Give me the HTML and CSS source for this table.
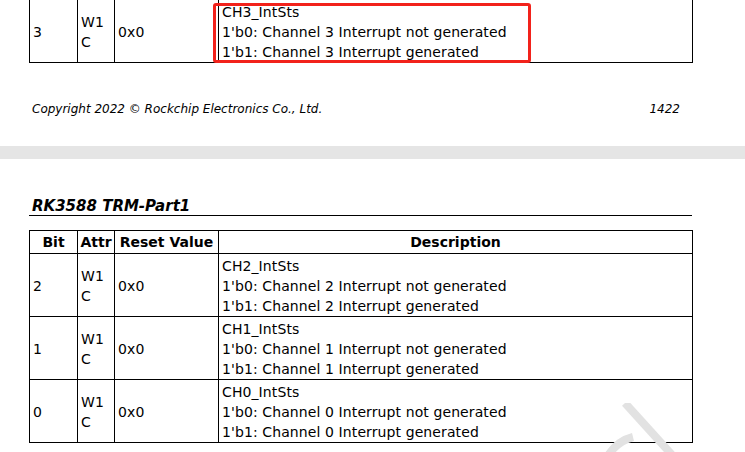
FILE: index.html
```html
<!DOCTYPE html>
<html>
<head>
<meta charset="utf-8">
<link rel="stylesheet" href="styles.css">
</head>
<body>
<div class="sheet">
  <section class="page page-top">
    <table class="reg">
      <colgroup><col class="c-bit"><col class="c-attr"><col class="c-reset"><col class="c-desc"></colgroup>
      <tr>
        <td>3</td><td>W1<br>C</td><td>0x0</td>
        <td>CH3_IntSts<br>1'b0: Channel 3 Interrupt not generated<br>1'b1: Channel 3 Interrupt generated</td>
      </tr>
    </table>
    <div class="highlight"></div>
    <footer class="foot">
      <span>Copyright 2022 © Rockchip Electronics Co., Ltd.</span>
      <span>1422</span>
    </footer>
  </section>
  <div class="gap"></div>
  <section class="page page-bottom">
    <h2 class="doc-title">RK3588 TRM-Part1</h2>
    <table class="reg">
      <colgroup><col class="c-bit"><col class="c-attr"><col class="c-reset"><col class="c-desc"></colgroup>
      <tr class="head"><th>Bit</th><th>Attr</th><th>Reset Value</th><th>Description</th></tr>
      <tr>
        <td>2</td><td>W1<br>C</td><td>0x0</td>
        <td>CH2_IntSts<br>1'b0: Channel 2 Interrupt not generated<br>1'b1: Channel 2 Interrupt generated</td>
      </tr>
      <tr>
        <td>1</td><td>W1<br>C</td><td>0x0</td>
        <td>CH1_IntSts<br>1'b0: Channel 1 Interrupt not generated<br>1'b1: Channel 1 Interrupt generated</td>
      </tr>
      <tr>
        <td>0</td><td>W1<br>C</td><td>0x0</td>
        <td>CH0_IntSts<br>1'b0: Channel 0 Interrupt not generated<br>1'b1: Channel 0 Interrupt generated</td>
      </tr>
    </table>
    <svg class="watermark" width="120" height="60" viewBox="0 0 120 60">
      <path d="M54 0 L102 53" stroke="#e2e2e2" stroke-width="8" fill="none"/>
      <path d="M36 54 Q46 38 62 34" stroke="#e2e2e2" stroke-width="8" fill="none"/>
    </svg>
  </section>
</div>
</body>
</html>
```

FILE: styles.css
```css
html, body {
  margin: 0;
  padding: 0;
  background: #ffffff;
}
body {
  font-family: "DejaVu Sans", Verdana, sans-serif;
  color: #000;
  width: 745px;
  height: 452px;
  overflow: hidden;
}
.sheet {
  display: flex;
  flex-direction: column;
}
.page {
  position: relative;
  padding: 0 53px 0 29px;
}
.page-top {
  margin-top: -1px;
}
.reg {
  border-collapse: collapse;
  width: 663px;
  table-layout: fixed;
  font-size: 14px;
  line-height: 20px;
  letter-spacing: 0.1px;
}
.c-bit { width: 48px; }
.c-attr { width: 37px; }
.c-reset { width: 104px; }
.c-desc { width: 474px; }
.reg td, .reg th {
  border: 1px solid #000;
  padding: 2px 3px 0 3px;
  vertical-align: middle;
  text-align: left;
  white-space: nowrap;
}
.reg th {
  font-weight: bold;
  text-align: center;
  padding: 1px 2px;
  letter-spacing: 0;
}
.highlight {
  position: absolute;
  left: 213px;
  top: 4px;
  width: 312px;
  height: 54px;
  border: 3px solid #f2221b;
  border-radius: 3px;
}
.foot {
  display: flex;
  justify-content: space-between;
  font-style: italic;
  font-size: 12px;
  line-height: 14px;
  padding: 39px 12px 0 3px;
  height: 44px;
}
.gap {
  height: 13px;
  background: #e5e5e5;
}
.page-bottom {
  padding-top: 38px;
}
.doc-title {
  margin: 0 0 14px 0;
  font-size: 15px;
  font-style: italic;
  font-weight: bold;
  line-height: 18px;
  padding-left: 3px;
  border-bottom: 1px solid #000;
}
.watermark {
  position: absolute;
  left: 571px;
  top: 244px;
}
```
